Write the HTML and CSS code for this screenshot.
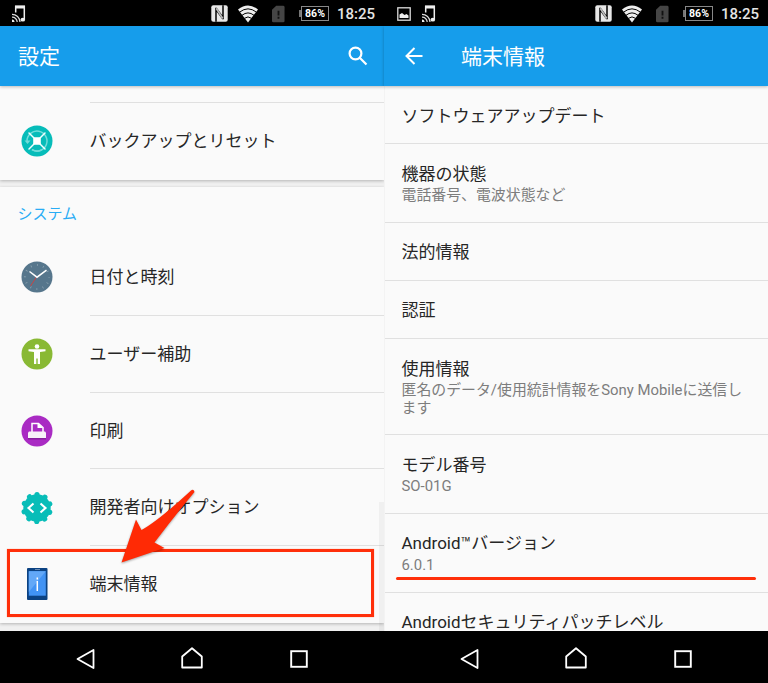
FILE: index.html
```html
<!DOCTYPE html>
<html lang="ja">
<head>
  <meta charset="UTF-8">
  <meta name="viewport" content="width=device-width, initial-scale=1.0">
  <title>設定 - 端末情報</title>
  <link rel="stylesheet" href="styles.css">
</head>
<body>
  <!-- shared icons -->
  <svg class="defs" width="0" height="0">
    <symbol id="cast" viewBox="0 0 14 18">
      <path d="M3.700 7.500V1.500H12.300V14.500" fill="none" stroke="#eee" stroke-width="1.500"/>
      <path d="M3 .5h10v3H3z" fill="#eee"/>
      <ellipse cx="10.800" cy="14.700" rx="2.300" ry="1.900" fill="#eee"/>
      <path d="M0 9.300a8 8 0 0 1 8 7.700M0 12.200a5 5 0 0 1 5.200 4.800" fill="none" stroke="#ddd" stroke-width="1.200"/>
      <path d="M0 14.500a2.500 2.500 0 0 1 2.500 2.500H0z" fill="#eee"/>
    </symbol>
    <symbol id="nfc" viewBox="0 0 17 17">
      <rect x=".3" y=".3" width="16.400" height="16.400" rx="2" fill="#e8e8e8"/>
      <path d="M5 16.700V4.500l7 9.500" fill="none" stroke="#000" stroke-width="1.500"/>
      <path d="M12 .3V12.500L5 3" fill="none" stroke="#000" stroke-width="1.500"/>
      <path d="M5.300 3.200 11.700 13.500" stroke="#bbb" stroke-width="1.800"/>
    </symbol>
    <symbol id="wifi" viewBox="0 0 20 18">
      <path d="M0 4.500Q10-3.500 20 4.500L10 17.500z" fill="#eee"/>
      <path d="M1.500 7.200Q10 .5 18.500 7.200M4 10.300Q10 5.500 16 10.300M6.500 13.300Q10 10.500 13.500 13.300" fill="none" stroke="#000" stroke-width="1"/>
    </symbol>
    <symbol id="sim" viewBox="0 0 14 18">
      <path d="M4.500 0H12q1.500 0 1.500 1.500v15Q13.500 18 12 18H1.500Q0 18 0 16.500V4.500z" fill="#454545"/>
      <path d="M6 5.500h2v5H6zM6 12h2v2H6z" fill="#111"/>
    </symbol>
    <symbol id="back-key" viewBox="0 0 20 22">
      <path d="M17.500 2v18L1.500 11z" fill="none" stroke="#fff" stroke-width="1.800" stroke-linejoin="round"/>
    </symbol>
    <symbol id="home-key" viewBox="0 0 22 22">
      <path d="M1.200 9.500 11 1.200l9.800 8.300v11H1.200z" fill="none" stroke="#fff" stroke-width="1.800" stroke-linejoin="round"/>
    </symbol>
    <symbol id="recent-key" viewBox="0 0 18 18">
      <rect x="1.200" y="1.200" width="15.600" height="15.600" fill="none" stroke="#fff" stroke-width="1.900"/>
    </symbol>
  </svg>

  <main class="screens">
    <section class="phone">
      <div class="statusbar">
        <svg class="ic-cast"><use href="#cast"/></svg>
        <div class="status-right">
          <svg class="ic-nfc"><use href="#nfc"/></svg>
          <svg class="ic-wifi"><use href="#wifi"/></svg>
          <svg class="ic-sim"><use href="#sim"/></svg>
          <span class="battery">86%</span>
          <span class="clock">18:25</span>
        </div>
      </div>
      <header class="appbar">
        <h1>設定</h1>
        <svg class="search" viewBox="0 0 20 20"><circle cx="7.500" cy="7.500" r="5.900"/><path d="m12 12 6.500 6.500"/></svg>
      </header>
      <div class="content settings">
        <div class="card card-top">
          <div class="item">
            <svg class="icon" viewBox="0 0 32 32">
              <circle cx="16" cy="16" r="15.500" fill="#06bcb9"/>
              <path d="M6 16a10 10 0 1 1 5 8.700" fill="none" stroke="#72dcd9" stroke-width="1.500"/>
              <path d="M11 24.700a10 10 0 0 0 10 0" fill="none" stroke="#72dcd9" stroke-width="1.500"/>
              <path d="m3.500 15.500 3 3.500 3-3.500z" fill="#72dcd9"/>
              <path d="m8 8 16 16M24 8 8 24" stroke="#f3ffff" stroke-width="1.500" stroke-linecap="round"/>
              <rect x="12.200" y="12.200" width="7.600" height="7.600" rx="1.500" fill="#fff"/>
            </svg>
            <span class="label">バックアップとリセット</span>
          </div>
        </div>
        <div class="card">
          <h2>システム</h2>
          <div class="item">
            <svg class="icon" viewBox="0 0 32 32">
              <circle cx="16" cy="16" r="15.500" fill="#56768c"/>
              <circle cx="16" cy="16" r="12" fill="none" stroke="#89a0af" stroke-width="2.200" stroke-dasharray=".8 5.483" stroke-dashoffset=".4"/>
              <path d="m15.500 16-6 9" stroke="#c84444" stroke-width="1"/>
              <path d="m8.500 10.500 7.500 5.700 9.500-7" fill="none" stroke="#fff" stroke-width="1.500"/>
            </svg>
            <span class="label">日付と時刻</span>
          </div>
          <div class="item">
            <svg class="icon" viewBox="0 0 32 32">
              <circle cx="16" cy="16" r="15.500" fill="#89b934"/>
              <circle cx="16" cy="8.500" r="2.300" fill="#fff"/>
              <path d="M7.500 11.200h17v2L19 14v12h-2.300v-5.500h-1.400V26H13V14l-5.500-.8z" fill="#fff"/>
            </svg>
            <span class="label">ユーザー補助</span>
          </div>
          <div class="item">
            <svg class="icon" viewBox="0 0 32 32">
              <circle cx="16" cy="16" r="15.500" fill="#a92bc3"/>
              <path d="M7 23h18v1.500H7z" fill="#86219c"/>
              <path d="M11 17V8.500h6.500l4.500 4V17" fill="none" stroke="#fff" stroke-width="1.500"/>
              <path d="m16.500 8 5.500 5h-5.500z" fill="#fff"/>
              <path d="M8 16.500H24l1 1V23H7v-5.500z" fill="#f7f2f8"/>
            </svg>
            <span class="label">印刷</span>
          </div>
          <div class="item">
            <svg class="icon" viewBox="0 0 32 32">
              <circle cx="16" cy="16" r="13.700" fill="#08bdb8"/>
              <circle cx="16" cy="16" r="13.400" fill="none" stroke="#08bdb8" stroke-width="5.200" stroke-linecap="round" stroke-dasharray=".01 8.409" transform="rotate(-90 16 16)"/>
              <path d="m12.500 11.500-5 4.500 5 4.500M19.500 11.500l5 4.500-5 4.500" fill="none" stroke="#fff" stroke-width="2.100"/>
            </svg>
            <span class="label">開発者向けオプション</span>
          </div>
          <div class="item">
            <svg class="icon" viewBox="0 0 32 32">
              <rect x="6" y="0" width="20.500" height="32" rx="1" fill="#0b4282"/>
              <rect x="7.800" y="3.200" width="17" height="24.500" fill="#4193f4"/>
              <path d="M7.800 3.200h17L7.800 24z" fill="#62a8f7"/>
              <path d="M14 1.500h5" stroke="#6a8cb5"/>
              <path d="M16.300 9.500v2M16.300 13v10" stroke="#fff" stroke-width="1.500"/>
            </svg>
            <span class="label">端末情報</span>
          </div>
        </div>
        <div class="scrollbar"></div>
      </div>
      <nav class="navbar">
        <svg class="key-back"><use href="#back-key"/></svg>
        <svg class="key-home"><use href="#home-key"/></svg>
        <svg class="key-recent"><use href="#recent-key"/></svg>
      </nav>
      <div class="highlight"></div>
      <svg class="arrow" viewBox="0 0 80 80">
        <path d="M73 2.500Q75.500.5 76.500 4 55 30 36.500 54.500L46.500 60 3.500 74.500 18 31.500 23.500 42Q40 33 73 2.500z" fill="#ff2a05"/>
      </svg>
    </section>

    <section class="phone">
      <div class="statusbar">
        <svg class="ic-image" viewBox="0 0 14 14"><rect x=".8" y=".8" width="12.400" height="12.400" fill="none" stroke="#ddd" stroke-width="1.300"/><path d="M2.500 11V7.500L5 6l2.500 2L9.500 7l2 1.500V11z" fill="#eee"/></svg>
        <svg class="ic-cast"><use href="#cast"/></svg>
        <div class="status-right">
          <svg class="ic-nfc"><use href="#nfc"/></svg>
          <svg class="ic-wifi"><use href="#wifi"/></svg>
          <svg class="ic-sim"><use href="#sim"/></svg>
          <span class="battery">86%</span>
          <span class="clock">18:25</span>
        </div>
      </div>
      <header class="appbar">
        <svg class="back" viewBox="0 0 18 18"><path d="M17.500 9H1.500M9.500 1 1.500 9l8 8"/></svg>
        <h1>端末情報</h1>
      </header>
      <div class="content about">
        <div class="row"><p class="label">ソフトウェアアップデート</p></div>
        <div class="row two"><p class="label">機器の状態</p><p class="sub">電話番号、電波状態など</p></div>
        <div class="row"><p class="label">法的情報</p></div>
        <div class="row"><p class="label">認証</p></div>
        <div class="row three"><p class="label">使用情報</p><p class="sub">匿名のデータ/使用統計情報をSony Mobileに送信します</p></div>
        <div class="row two"><p class="label">モデル番号</p><p class="sub">SO-01G</p></div>
        <div class="row two"><p class="label">Android<span class="tm">™</span>バージョン</p><p class="sub">6.0.1</p></div>
        <div class="row two"><p class="label">Androidセキュリティパッチレベル</p></div>
      </div>
      <nav class="navbar">
        <svg class="key-back"><use href="#back-key"/></svg>
        <svg class="key-home"><use href="#home-key"/></svg>
        <svg class="key-recent"><use href="#recent-key"/></svg>
      </nav>
      <div class="underline"></div>
    </section>
  </main>
</body>
</html>
```

FILE: styles.css
```css
:root {
  --blue: #169deb;
  --accent: #29acf5;
  --red: #ff2f0a;
  --text: #262626;
  --sub-text: #7d7d7d;
  --line: #e0e0e0;
}
* { margin: 0; padding: 0; box-sizing: border-box; }
body { font-family: Roboto, "Noto Sans CJK JP", sans-serif; background: #000; color: var(--text); }
svg { display: block; flex: none; }
.defs { position: absolute; }
.screens { display: flex; width: 768px; height: 683px; overflow: hidden; }
.phone { position: relative; width: 384px; height: 683px; display: flex; flex-direction: column; }

/* Status bar */
.statusbar { height: 26px; background: #000; display: flex; align-items: center; padding: 1px 9px 0 12px; flex: none; }
.ic-cast { width: 14px; height: 18px; }
.ic-image { width: 14px; height: 14px; margin: 0 11px 0 1px; }
.status-right { display: flex; align-items: center; margin-left: auto; }
.ic-nfc { width: 17px; height: 17px; margin-right: 10px; }
.ic-wifi { width: 20px; height: 18px; margin-right: 14px; }
.ic-sim { width: 13px; height: 18px; margin-right: 16px; }
.battery {
  position: relative;
  width: 28px;
  height: 15px;
  margin-right: 8px;
  border: 1px solid #888;
  color: #fff;
  font-size: 10.5px;
  font-weight: 700;
  line-height: 14px;
  text-align: center;
}
.battery::before { content: ""; position: absolute; left: -3px; top: 3px; width: 2px; height: 7px; background: #777; }
.clock { width: 38px; color: #e4e4e4; font-size: 15px; font-weight: 500; line-height: 26px; white-space: nowrap; }

/* App bar */
.appbar {
  position: relative;
  z-index: 1;
  height: 60px;
  flex: none;
  display: flex;
  align-items: center;
  padding: 0 16px 0 18px;
  background: var(--blue);
  color: #fff;
  box-shadow: 0 1px 3px rgba(0, 0, 0, 0.25);
}
.appbar h1 { font-size: 21px; font-weight: 400; line-height: 30px; padding-top: 1px; }
.search { width: 20px; height: 20px; margin-left: auto; fill: none; stroke: #fff; stroke-width: 2.2; }
.back { width: 18px; height: 18px; margin: 0 38px 0 3px; fill: none; stroke: #fff; stroke-width: 2; }

.content { position: relative; height: 545px; flex: none; overflow: hidden; background: #fafafa; }
.label { font-size: 17px; line-height: 22px; white-space: nowrap; }

/* Settings list */
.settings { background: #f0f0f0; }
.card { background: #fafafa; box-shadow: 0 1px 3px rgba(0, 0, 0, 0.25); margin-bottom: 7px; }
.card-top { padding-top: 17px; height: 94px; }
.card h2 { height: 52px; padding: 0 17.500px; color: var(--accent); font-size: 15px; font-weight: 400; line-height: 54px; }
.item { height: 76.75px; display: flex; align-items: center; padding-left: 20.500px; }
.item .icon { width: 32px; height: 32px; margin-right: 37px; }
.item .label { flex: 1; height: 100%; line-height: 77px; }
.item + .item .label, .card-top .label { box-shadow: 0 -1px 0 var(--line); }
.scrollbar { position: absolute; right: 0; top: 416px; width: 5px; height: 129px; background: rgba(0, 0, 0, 0.04); }

/* About list */
.about { border-left: 1px solid #f3f3f3; }
.row { height: 58.3px; padding: 18.500px 24px 0 16.500px; border-bottom: 1px solid var(--line); }
.row:first-child { height: 58px; }
.row.two { height: 78.6px; }
.row.three { height: 96.2px; }
.sub { color: var(--sub-text); font-size: 14.9px; line-height: 17.500px; margin-top: 2.500px; }
.row.three .sub { margin-right: -10px; }

/* Navigation keys */
.navbar { height: 52px; flex: none; background: #000; display: flex; align-items: center; padding: 3px 0 0 76px; }
.key-back { width: 20px; height: 22px; }
.key-home { width: 22px; height: 22px; margin: -1px 0 0 85px; }
.key-recent { width: 18px; height: 18px; margin-left: 87px; }

/* Red marks over the screens */
.highlight { position: absolute; left: 7px; top: 549px; width: 367px; height: 68px; border: 3px solid var(--red); box-shadow: 0 0 1px #ff8c70; }
.arrow { position: absolute; left: 118px; top: 488px; width: 80px; height: 80px; filter: drop-shadow(0 1px 1px rgba(0, 0, 0, 0.35)); }
.underline { position: absolute; left: 12px; top: 577px; width: 360px; height: 3px; border-radius: 2px; background: var(--red); }
```
